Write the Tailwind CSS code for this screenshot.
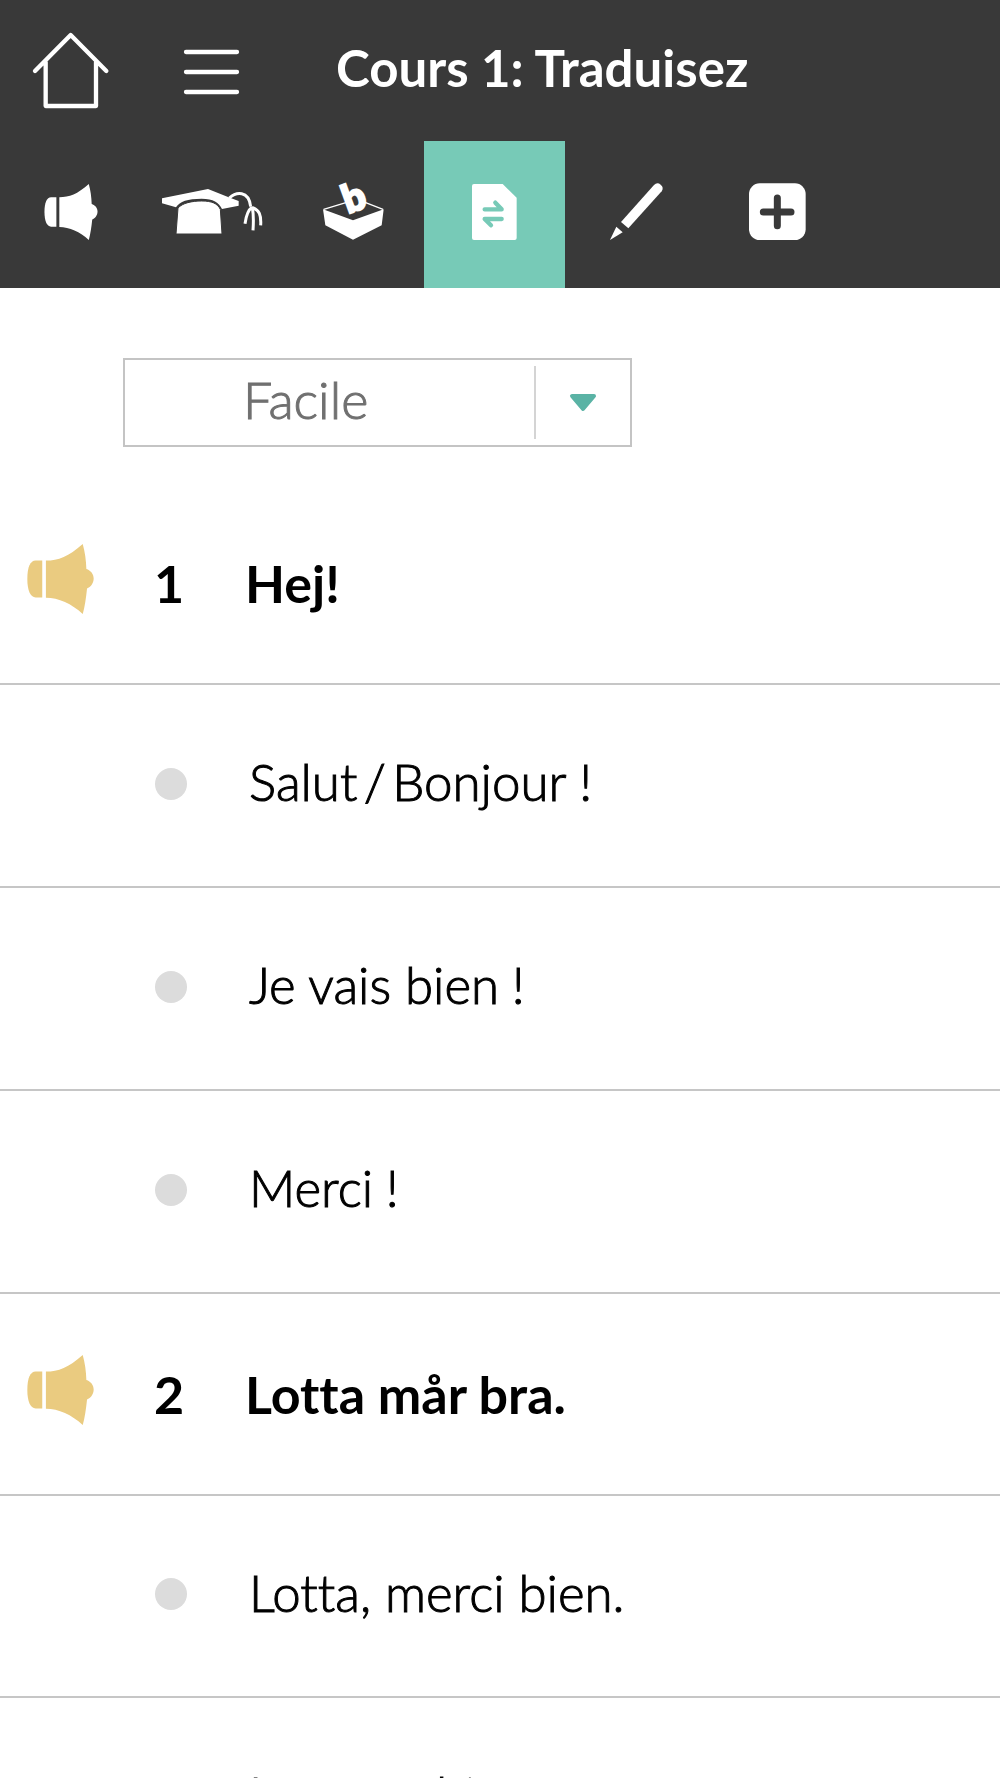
<!DOCTYPE html>
<html lang="fr">
<head>
<meta charset="utf-8">
<meta name="viewport" content="width=device-width, initial-scale=1">
<title>Cours 1: Traduisez</title>
<script src="https://cdn.jsdelivr.net/npm/@tailwindcss/browser@4"></script>
</head>
<body class="flex h-screen flex-col overflow-hidden bg-white font-['Lato',sans-serif] text-black [font-variant-ligatures:none]">
<svg class="hidden" aria-hidden="true">
  <symbol id="horn" viewBox="80 72 202 211">
    <path d="M126 122H106C90 122 81 142 81 177S90 233 106 233H126Z"/>
    <path d="M137 122C175 122 205 110 248 72C255 98 258 120 259 147C272 151 281 162 281 176C281 190 272 202 261 206C258 235 254 262 248 283C215 252 175 234 137 234Z"/>
  </symbol>
</svg>

<header class="shrink-0 bg-[#393939] text-white">
  <div class="flex h-[141px] items-center">
    <a href="#accueil" aria-label="Accueil" class="size-[141px] shrink-0">
      <svg viewBox="0 0 423 423" class="size-full" fill="none" stroke="currentColor" stroke-width="13" stroke-linecap="round" stroke-linejoin="round"><path d="M105 213L212 105L319 213M137 187V318H288V187"/></svg>
    </a>
    <button type="button" aria-label="Menu" class="size-[141px] shrink-0">
      <svg viewBox="423 0 423 423" class="size-full" fill="none" stroke="currentColor" stroke-width="13" stroke-linecap="round"><path d="M558 156H711M558 216H711M558 276H711"/></svg>
    </button>
    <h1 class="whitespace-nowrap pb-1.5 pl-[54px] text-[51px] font-bold leading-none">Cours 1: Traduisez</h1>
  </div>
  <nav class="flex h-[147px]" aria-label="Exercices">
    <a href="#ecouter" aria-label="Écouter" class="flex w-[141px] items-center justify-center pb-1.5">
      <svg class="h-14 w-[54px]" fill="currentColor"><use href="#horn"/></svg>
    </a>
    <a href="#apprendre" aria-label="Apprendre" class="w-[141px]">
      <svg viewBox="363 -27 423 441" class="size-full">
        <path fill="currentColor" d="M426 145L564 117L626 142L656 153V167L606 177C597 157 580 146 545 146C502 146 480 154 468 172L426 160Z"/>
        <path fill="currentColor" stroke="#393939" stroke-width="3" d="M474 174C488 159 515 153 545 153C575 153 592 160 601 178L606 252H468Z"/>
        <path fill="none" stroke="currentColor" stroke-width="9" d="M628 144C648 126 686 120 692 170M696 172C682 182 678 200 675 221M697 172Q702 200 699 241M696 172C718 180 724 195 722 226"/>
      </svg>
    </a>
    <a href="#vocabulaire" aria-label="Vocabulaire" class="w-[142px]">
      <svg viewBox="-54 3 426 441" class="size-full">
        <path fill="currentColor" d="M69 208L159 241L251 208L245 256L159 299L76 256Z"/>
        <path fill="none" stroke="currentColor" stroke-width="4" d="M71 208L140 187M195 187L249 208"/>
        <text x="0" y="0" transform="translate(144 221) rotate(-20)" fill="currentColor" stroke="currentColor" stroke-width="7" class="text-[116px] font-black">b</text>
      </svg>
    </a>
    <a href="#traduire" aria-label="Traduire" aria-current="page" class="w-[141px] bg-[#77cab7]">
      <svg viewBox="372 3 423 441" class="size-full">
        <path fill="currentColor" d="M522 132H608L650 173V294Q650 300 644 300H522Q516 300 516 294V138Q516 132 522 132Z"/>
        <path fill="none" stroke="#77cab7" stroke-width="13" stroke-linecap="round" stroke-linejoin="round" d="M554 208H605L586 188M605 237H554L573 256"/>
      </svg>
    </a>
    <a href="#ecrire" aria-label="Écrire" class="w-[141px]">
      <svg viewBox="-45 -27 423 441" class="size-full" fill="currentColor">
        <path d="M123 216L222 105A15 15 0 0 1 245 124L145 235Z"/><path d="M109 230L128 247L90 270Z"/>
      </svg>
    </a>
    <a href="#plus" aria-label="Plus" class="w-[141px]">
      <svg viewBox="378 -27 423 441" class="size-full">
        <rect x="507" y="100" width="170" height="170" rx="32" fill="currentColor"/>
        <path fill="none" stroke="#393939" stroke-width="21" stroke-linecap="round" d="M592 144V227M550 186H633"/>
      </svg>
    </a>
  </nav>
</header>

<main class="min-h-0 flex-1 overflow-y-auto [scrollbar-width:none]">
  <div class="relative ml-[123px] mt-[70px] w-[509px] max-w-full">
    <label for="niveau" class="sr-only">Niveau</label>
    <select id="niveau" class="block h-[89px] w-full appearance-none border-2 border-[#c4c4c4] bg-white pb-2 pl-[118px] pr-24 text-[52px] leading-none font-light text-[#707070] [-webkit-text-stroke:1px_#707070]">
      <option>Facile</option>
      <option>Difficile</option>
    </select>
    <div class="pointer-events-none absolute inset-y-2 right-0.5 flex w-24 items-center justify-center border-l-2 border-[#d4d4d4]">
      <svg class="h-[18px] w-7" viewBox="0 0 28 18" fill="#5ab3a5" stroke="#5ab3a5" stroke-width="4" stroke-linejoin="round"><path d="M3 2H25L14 15Z"/></svg>
    </div>
  </div>

  <ol class="mt-[35px]">
    <li>
      <div class="grid h-[203px] grid-cols-[154px_91px_1fr] items-center border-b-2 border-[#c6c6c6] pb-2 text-[52px] leading-none font-bold">
        <button type="button" aria-label="Écouter Hej!" class="ml-[27px] w-[67px] text-[#eacb80]"><svg class="h-[70px] w-full" fill="currentColor"><use href="#horn"/></svg></button>
        <span class="pt-2">1</span>
        <h2 class="pt-2">Hej!</h2>
      </div>
      <ul class="text-[51px] leading-none font-light [-webkit-text-stroke:1px_black] [&>li]:grid [&>li]:h-[203px] [&>li]:grid-cols-[90px_1fr] [&>li]:items-center [&>li]:border-b-2 [&>li]:border-[#c6c6c6] [&>li]:pb-1 [&>li]:pl-[155px]">
        <li><span class="size-8 rounded-full bg-[#dcdcdc]"></span><span class="pb-1 pl-1">Salut&#x2009;/&#x2009;Bonjour&#x202F;!</span></li>
        <li><span class="size-8 rounded-full bg-[#dcdcdc]"></span><span class="pb-1 pl-1">Je vais bien&#x202F;!</span></li>
        <li><span class="size-8 rounded-full bg-[#dcdcdc]"></span><span class="pb-1 pl-1">Merci&#x202F;!</span></li>
      </ul>
    </li>
    <li>
      <div class="grid h-[202px] grid-cols-[154px_91px_1fr] items-center border-b-2 border-[#c6c6c6] pb-2 text-[52px] leading-none font-bold">
        <button type="button" aria-label="Écouter Lotta mår bra." class="ml-[27px] w-[67px] text-[#eacb80]"><svg class="h-[70px] w-full" fill="currentColor"><use href="#horn"/></svg></button>
        <span class="pt-2">2</span>
        <h2 class="pt-2">Lotta mår bra.</h2>
      </div>
      <ul class="text-[51px] leading-none font-light [-webkit-text-stroke:1px_black] [&>li]:grid [&>li]:h-[202px] [&>li]:grid-cols-[90px_1fr] [&>li]:items-center [&>li]:border-b-2 [&>li]:border-[#c6c6c6] [&>li]:pb-1 [&>li]:pl-[155px]">
        <li><span class="size-8 rounded-full bg-[#dcdcdc]"></span><span class="pb-1 pl-1">Lotta, merci bien.</span></li>
        <li><span class="size-8 rounded-full bg-[#dcdcdc]"></span><span class="pb-1 pl-1">Lotta va bien.</span></li>
      </ul>
    </li>
  </ol>
</main>
</body>
</html>
